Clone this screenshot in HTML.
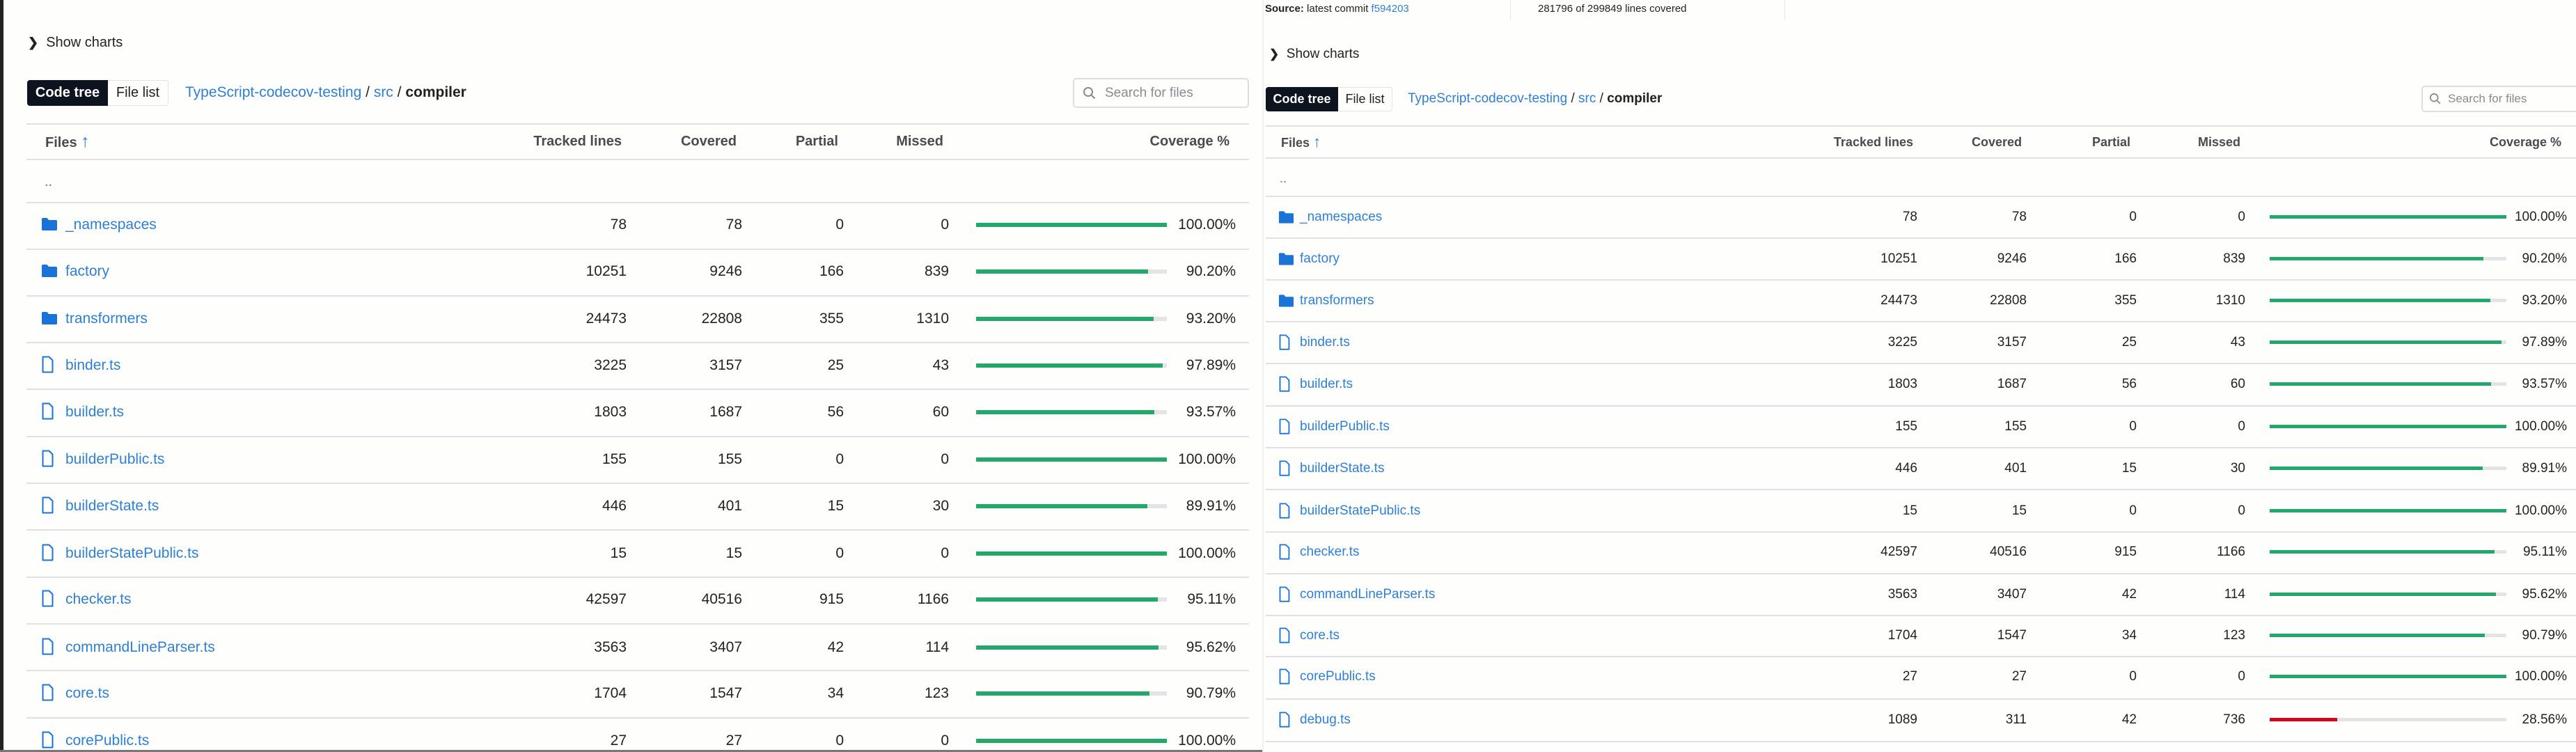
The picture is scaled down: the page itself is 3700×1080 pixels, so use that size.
<!DOCTYPE html>
<html><head><meta charset="utf-8"><style>
*{margin:0;padding:0;box-sizing:border-box}
body{width:3700px;height:1080px;overflow:hidden;background:#fefefc;font-family:"Liberation Sans",sans-serif;color:#222;position:relative}
.a{position:absolute;white-space:nowrap}
.ln{position:absolute;height:2px;background:#e0e1e6}
.lnk{color:#2f7fd3}
.hd{font-weight:bold;color:#4a4a50}
.ar{color:#2f7fd3;font-weight:normal;font-size:1.25em}
.btn{position:absolute;background:#0d1420;color:#fff;font-weight:bold;border-radius:4px 0 0 4px;text-align:center}
.btn2{position:absolute;border:1px solid #e2e2e2;border-left:none;border-radius:0 4px 4px 0;text-align:center;color:#222}
.sb{position:absolute;border:2px solid #dedede;border-radius:5px;color:#8a8a90}
.row{position:absolute;left:0;width:3700px}
.row>span{position:absolute;top:0}
.L{height:30px;line-height:30px;font-size:21px}
.R{height:28px;line-height:28px;font-size:19px}
.bar{position:absolute;background:#e4e4e6}
.bar i{position:absolute;left:0;top:0;bottom:0;background:#21a86a}
.L .bar{left:1402px;width:274px;height:6px;top:12px}
.R .bar{left:3260px;width:340px;height:5px;top:11px}
.L .n{left:94px}.L .ic{left:59px;top:3px}
.L .c1{right:2800px}.L .c2{right:2634px}.L .c3{right:2488px}.L .c4{right:2337px}.L .c5{right:1925px}
.R .n{left:1867px}.R .ic{left:1836px;top:2px}
.R .c1{right:946px}.R .c2{right:789px}.R .c3{right:631px}.R .c4{right:475px}.R .c5{right:13px}
</style></head><body>
<svg width="0" height="0" style="position:absolute"><defs>
<symbol id="fo" viewBox="0 0 24 20"><path d="M1 2.5A1.5 1.5 0 0 1 2.5 1h6l2.5 3h10.5A1.5 1.5 0 0 1 23 5.5v12a1.5 1.5 0 0 1-1.5 1.5h-19A1.5 1.5 0 0 1 1 17.5z" fill="#1a74d8"/></symbol>
<symbol id="fi" viewBox="0 0 18 26"><path d="M2.5 1.5h9l5 5v17h-14z" fill="none" stroke="#1a74d8" stroke-width="2" stroke-linejoin="round"/></symbol>
</defs></svg>
<div class="a" style="left:0;top:0;width:5px;height:1080px;background:#222"></div>
<div class="a" style="left:0;top:1077px;width:1815px;height:3px;background:#777"></div>
<div class="a" style="left:1813px;top:0;width:2px;height:1080px;background:#f0f0f0"></div>

<!-- LEFT -->
<div class="a" style="left:40px;top:48px;font-size:20px;line-height:26px"><b style="font-size:18px">&#x276F;</b>&nbsp; Show charts</div>
<div class="btn" style="left:39px;top:115px;width:116px;height:37px;line-height:37px;font-size:20px">Code tree</div>
<div class="btn2" style="left:155px;top:115px;width:87px;height:37px;line-height:35px;font-size:20px">File list</div>
<div class="a" style="left:266px;top:118px;font-size:21px;line-height:30px"><span class="lnk">TypeScript-codecov-testing</span> / <span class="lnk">src</span> / <b>compiler</b></div>
<div class="sb" style="left:1541px;top:112px;width:253px;height:43px;font-size:19px;line-height:39px;padding-left:44px"><svg class="a" style="left:12px;top:10px" width="20" height="20" viewBox="0 0 20 20"><circle cx="8" cy="8" r="6" fill="none" stroke="#8a8a90" stroke-width="2"/><path d="M12.5 12.5l5 5" stroke="#8a8a90" stroke-width="2"/></svg>Search for files</div>
<div class="ln" style="left:38px;top:177px;width:1756px"></div>
<div class="row L hd" style="top:188px;font-size:20px"><span style="left:65px">Files <span class="ar">&#x2191;</span></span><span style="right:2807px">Tracked lines</span><span style="right:2642px">Covered</span><span style="right:2496px">Partial</span><span style="right:2345px">Missed</span><span style="right:1934px">Coverage %</span></div>
<div class="ln" style="left:38px;top:228px;width:1756px"></div>
<div class="a" style="left:64px;top:250px;font-size:20px;color:#2f7fd3">..</div>
<div class="ln" style="left:38px;top:290px;width:1756px"></div>

<div class="row L" style="top:308px"><svg class="a ic" width="24" height="22"><use href="#fo"/></svg><span class="n lnk">_namespaces</span><span class="c1">78</span><span class="c2">78</span><span class="c3">0</span><span class="c4">0</span><div class="bar"><i style="width:100%"></i></div><span class="c5">100.00%</span></div>
<div class="ln" style="left:38px;top:357px;width:1756px"></div>
<div class="row L" style="top:375px"><svg class="a ic" width="24" height="22"><use href="#fo"/></svg><span class="n lnk">factory</span><span class="c1">10251</span><span class="c2">9246</span><span class="c3">166</span><span class="c4">839</span><div class="bar"><i style="width:90.2%"></i></div><span class="c5">90.20%</span></div>
<div class="ln" style="left:38px;top:424px;width:1756px"></div>
<div class="row L" style="top:443px"><svg class="a ic" width="24" height="22"><use href="#fo"/></svg><span class="n lnk">transformers</span><span class="c1">24473</span><span class="c2">22808</span><span class="c3">355</span><span class="c4">1310</span><div class="bar"><i style="width:93.2%"></i></div><span class="c5">93.20%</span></div>
<div class="ln" style="left:38px;top:491px;width:1756px"></div>
<div class="row L" style="top:510px"><svg class="a ic" width="18" height="26" style="top:1px"><use href="#fi"/></svg><span class="n lnk">binder.ts</span><span class="c1">3225</span><span class="c2">3157</span><span class="c3">25</span><span class="c4">43</span><div class="bar"><i style="width:97.9%"></i></div><span class="c5">97.89%</span></div>
<div class="ln" style="left:38px;top:558px;width:1756px"></div>
<div class="row L" style="top:577px"><svg class="a ic" width="18" height="26" style="top:1px"><use href="#fi"/></svg><span class="n lnk">builder.ts</span><span class="c1">1803</span><span class="c2">1687</span><span class="c3">56</span><span class="c4">60</span><div class="bar"><i style="width:93.6%"></i></div><span class="c5">93.57%</span></div>
<div class="ln" style="left:38px;top:626px;width:1756px"></div>
<div class="row L" style="top:645px"><svg class="a ic" width="18" height="26" style="top:1px"><use href="#fi"/></svg><span class="n lnk">builderPublic.ts</span><span class="c1">155</span><span class="c2">155</span><span class="c3">0</span><span class="c4">0</span><div class="bar"><i style="width:100%"></i></div><span class="c5">100.00%</span></div>
<div class="ln" style="left:38px;top:693px;width:1756px"></div>
<div class="row L" style="top:712px"><svg class="a ic" width="18" height="26" style="top:1px"><use href="#fi"/></svg><span class="n lnk">builderState.ts</span><span class="c1">446</span><span class="c2">401</span><span class="c3">15</span><span class="c4">30</span><div class="bar"><i style="width:89.9%"></i></div><span class="c5">89.91%</span></div>
<div class="ln" style="left:38px;top:760px;width:1756px"></div>
<div class="row L" style="top:780px"><svg class="a ic" width="18" height="26" style="top:1px"><use href="#fi"/></svg><span class="n lnk">builderStatePublic.ts</span><span class="c1">15</span><span class="c2">15</span><span class="c3">0</span><span class="c4">0</span><div class="bar"><i style="width:100%"></i></div><span class="c5">100.00%</span></div>
<div class="ln" style="left:38px;top:828px;width:1756px"></div>
<div class="row L" style="top:846px"><svg class="a ic" width="18" height="26" style="top:1px"><use href="#fi"/></svg><span class="n lnk">checker.ts</span><span class="c1">42597</span><span class="c2">40516</span><span class="c3">915</span><span class="c4">1166</span><div class="bar"><i style="width:95.1%"></i></div><span class="c5">95.11%</span></div>
<div class="ln" style="left:38px;top:895px;width:1756px"></div>
<div class="row L" style="top:915px"><svg class="a ic" width="18" height="26" style="top:1px"><use href="#fi"/></svg><span class="n lnk">commandLineParser.ts</span><span class="c1">3563</span><span class="c2">3407</span><span class="c3">42</span><span class="c4">114</span><div class="bar"><i style="width:95.6%"></i></div><span class="c5">95.62%</span></div>
<div class="ln" style="left:38px;top:962px;width:1756px"></div>
<div class="row L" style="top:981px"><svg class="a ic" width="18" height="26" style="top:1px"><use href="#fi"/></svg><span class="n lnk">core.ts</span><span class="c1">1704</span><span class="c2">1547</span><span class="c3">34</span><span class="c4">123</span><div class="bar"><i style="width:90.8%"></i></div><span class="c5">90.79%</span></div>
<div class="ln" style="left:38px;top:1030px;width:1756px"></div>
<div class="row L" style="top:1049px"><svg class="a ic" width="18" height="26" style="top:1px"><use href="#fi"/></svg><span class="n lnk">corePublic.ts</span><span class="c1">27</span><span class="c2">27</span><span class="c3">0</span><span class="c4">0</span><div class="bar"><i style="width:100%"></i></div><span class="c5">100.00%</span></div>

<!-- RIGHT -->
<div class="a" style="left:1817px;top:3px;font-size:15px;line-height:20px"><b>Source:</b> latest commit <span class="lnk">f594203</span></div>
<div class="a" style="left:2169px;top:0;width:1px;height:28px;background:#e6e6e6"></div>
<div class="a" style="left:2209px;top:3px;font-size:15px;line-height:20px">281796 of 299849 lines covered</div>
<div class="a" style="left:2563px;top:0;width:1px;height:28px;background:#e6e6e6"></div>
<div class="a" style="left:1823px;top:66px;font-size:19px;line-height:24px"><b style="font-size:17px">&#x276F;</b>&nbsp; Show charts</div>
<div class="btn" style="left:1818px;top:125px;width:104px;height:35px;line-height:35px;font-size:18px">Code tree</div>
<div class="btn2" style="left:1922px;top:125px;width:78px;height:35px;line-height:33px;font-size:18px">File list</div>
<div class="a" style="left:2022px;top:128px;font-size:19px;line-height:28px"><span class="lnk">TypeScript-codecov-testing</span> / <span class="lnk">src</span> / <b>compiler</b></div>
<div class="sb" style="left:3478px;top:123px;width:240px;height:38px;font-size:17px;line-height:34px;padding-left:36px"><svg class="a" style="left:9px;top:8px" width="18" height="18" viewBox="0 0 20 20"><circle cx="8" cy="8" r="6" fill="none" stroke="#8a8a90" stroke-width="2"/><path d="M12.5 12.5l5 5" stroke="#8a8a90" stroke-width="2"/></svg>Search for files</div>
<div class="ln" style="left:1818px;top:180px;width:1882px"></div>
<div class="row R hd" style="top:190px;font-size:18px"><span style="left:1840px">Files <span class="ar">&#x2191;</span></span><span style="right:952px">Tracked lines</span><span style="right:796px">Covered</span><span style="right:640px">Partial</span><span style="right:482px">Missed</span><span style="right:21px">Coverage %</span></div>
<div class="ln" style="left:1818px;top:226px;width:1882px"></div>
<div class="a" style="left:1838px;top:246px;font-size:18px;color:#2f7fd3">..</div>
<div class="ln" style="left:1818px;top:281px;width:1882px"></div>

<div class="row R" style="top:298px"><svg class="a ic" width="23" height="20" style="top:4px"><use href="#fo"/></svg><span class="n lnk">_namespaces</span><span class="c1">78</span><span class="c2">78</span><span class="c3">0</span><span class="c4">0</span><div class="bar"><i style="width:100%"></i></div><span class="c5">100.00%</span></div>
<div class="ln" style="left:1818px;top:341px;width:1882px"></div>
<div class="row R" style="top:358px"><svg class="a ic" width="23" height="20" style="top:4px"><use href="#fo"/></svg><span class="n lnk">factory</span><span class="c1">10251</span><span class="c2">9246</span><span class="c3">166</span><span class="c4">839</span><div class="bar"><i style="width:90.2%"></i></div><span class="c5">90.20%</span></div>
<div class="ln" style="left:1818px;top:401px;width:1882px"></div>
<div class="row R" style="top:418px"><svg class="a ic" width="23" height="20" style="top:4px"><use href="#fo"/></svg><span class="n lnk">transformers</span><span class="c1">24473</span><span class="c2">22808</span><span class="c3">355</span><span class="c4">1310</span><div class="bar"><i style="width:93.2%"></i></div><span class="c5">93.20%</span></div>
<div class="ln" style="left:1818px;top:461px;width:1882px"></div>
<div class="row R" style="top:478px"><svg class="a ic" width="17" height="24"><use href="#fi"/></svg><span class="n lnk">binder.ts</span><span class="c1">3225</span><span class="c2">3157</span><span class="c3">25</span><span class="c4">43</span><div class="bar"><i style="width:97.9%"></i></div><span class="c5">97.89%</span></div>
<div class="ln" style="left:1818px;top:521px;width:1882px"></div>
<div class="row R" style="top:538px"><svg class="a ic" width="17" height="24"><use href="#fi"/></svg><span class="n lnk">builder.ts</span><span class="c1">1803</span><span class="c2">1687</span><span class="c3">56</span><span class="c4">60</span><div class="bar"><i style="width:93.6%"></i></div><span class="c5">93.57%</span></div>
<div class="ln" style="left:1818px;top:582px;width:1882px"></div>
<div class="row R" style="top:599px"><svg class="a ic" width="17" height="24"><use href="#fi"/></svg><span class="n lnk">builderPublic.ts</span><span class="c1">155</span><span class="c2">155</span><span class="c3">0</span><span class="c4">0</span><div class="bar"><i style="width:100%"></i></div><span class="c5">100.00%</span></div>
<div class="ln" style="left:1818px;top:642px;width:1882px"></div>
<div class="row R" style="top:659px"><svg class="a ic" width="17" height="24"><use href="#fi"/></svg><span class="n lnk">builderState.ts</span><span class="c1">446</span><span class="c2">401</span><span class="c3">15</span><span class="c4">30</span><div class="bar"><i style="width:89.9%"></i></div><span class="c5">89.91%</span></div>
<div class="ln" style="left:1818px;top:702px;width:1882px"></div>
<div class="row R" style="top:720px"><svg class="a ic" width="17" height="24"><use href="#fi"/></svg><span class="n lnk">builderStatePublic.ts</span><span class="c1">15</span><span class="c2">15</span><span class="c3">0</span><span class="c4">0</span><div class="bar"><i style="width:100%"></i></div><span class="c5">100.00%</span></div>
<div class="ln" style="left:1818px;top:763px;width:1882px"></div>
<div class="row R" style="top:779px"><svg class="a ic" width="17" height="24"><use href="#fi"/></svg><span class="n lnk">checker.ts</span><span class="c1">42597</span><span class="c2">40516</span><span class="c3">915</span><span class="c4">1166</span><div class="bar"><i style="width:95.1%"></i></div><span class="c5">95.11%</span></div>
<div class="ln" style="left:1818px;top:823px;width:1882px"></div>
<div class="row R" style="top:840px"><svg class="a ic" width="17" height="24"><use href="#fi"/></svg><span class="n lnk">commandLineParser.ts</span><span class="c1">3563</span><span class="c2">3407</span><span class="c3">42</span><span class="c4">114</span><div class="bar"><i style="width:95.6%"></i></div><span class="c5">95.62%</span></div>
<div class="ln" style="left:1818px;top:883px;width:1882px"></div>
<div class="row R" style="top:899px"><svg class="a ic" width="17" height="24"><use href="#fi"/></svg><span class="n lnk">core.ts</span><span class="c1">1704</span><span class="c2">1547</span><span class="c3">34</span><span class="c4">123</span><div class="bar"><i style="width:90.8%"></i></div><span class="c5">90.79%</span></div>
<div class="ln" style="left:1818px;top:942px;width:1882px"></div>
<div class="row R" style="top:958px"><svg class="a ic" width="17" height="24"><use href="#fi"/></svg><span class="n lnk">corePublic.ts</span><span class="c1">27</span><span class="c2">27</span><span class="c3">0</span><span class="c4">0</span><div class="bar"><i style="width:100%"></i></div><span class="c5">100.00%</span></div>
<div class="ln" style="left:1818px;top:1003px;width:1882px"></div>
<div class="row R" style="top:1020px"><svg class="a ic" width="17" height="24"><use href="#fi"/></svg><span class="n lnk">debug.ts</span><span class="c1">1089</span><span class="c2">311</span><span class="c3">42</span><span class="c4">736</span><div class="bar"><i style="width:28.56%;background:#d9001b"></i></div><span class="c5">28.56%</span></div>
<div class="ln" style="left:1818px;top:1064px;width:1882px"></div>
</body></html>
